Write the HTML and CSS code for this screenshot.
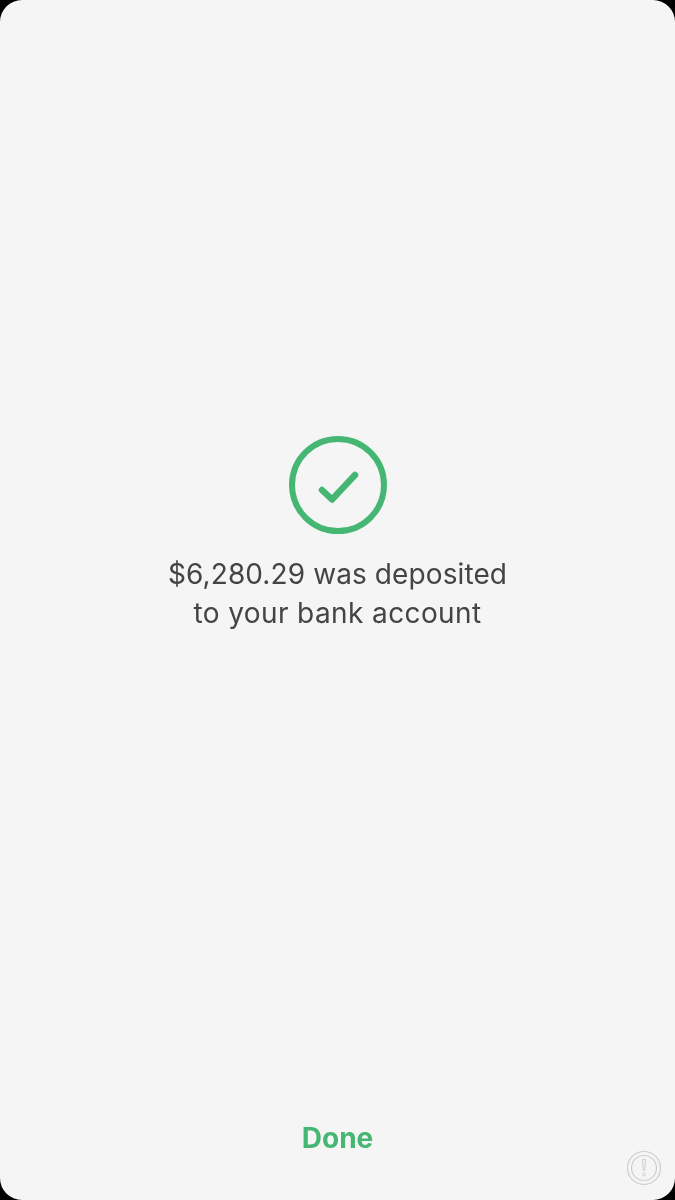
FILE: index.html
```html
<!DOCTYPE html>
<html lang="en">
<head>
  <meta charset="UTF-8">
  <meta name="viewport" content="width=device-width, initial-scale=1.0">
  <title>Deposit complete</title>
  <link rel="stylesheet" href="styles.css">
</head>
<body>
  <div class="screen">
    <div class="confirmation">
      <svg class="check-icon" width="98" height="98" viewBox="0 0 98 98" fill="none">
        <circle cx="49" cy="49" r="46" stroke="#45b772" stroke-width="6"/>
        <path d="M33 54 L43 63.500 L66 39" stroke="#45b772" stroke-width="6.500" stroke-linecap="round" stroke-linejoin="round"/>
      </svg>
      <p class="message">$6,280.29 was deposited<br><span class="message-second">to your bank account</span></p>
    </div>
    <button class="done-button">Done</button>
    <svg class="alert-badge" width="36" height="36" viewBox="0 0 36 36" fill="none">
      <circle cx="18" cy="18" r="16.500" stroke="#cfcfd1" stroke-width="1.200"/>
      <circle cx="18" cy="18" r="12.500" stroke="#cfcfd1" stroke-width="1.200"/>
      <path d="M16.500 9.500 h3 l-0.800 11 h-1.400 z" stroke="#cfcfd1" stroke-width="1"/>
      <circle cx="18" cy="24.500" r="1.500" stroke="#cfcfd1" stroke-width="1"/>
    </svg>
  </div>
</body>
</html>
```
FILE: styles.css
```css
html, body {
  margin: 0;
  background-color: #000;
}
.screen {
  position: relative;
  box-sizing: border-box;
  height: 1200px;
  padding: 436px 0 42px;
  display: flex;
  flex-direction: column;
  align-items: center;
  justify-content: space-between;
  background-color: #f5f5f6;
  border-radius: 22px;
  font-family: 'Inter', sans-serif;
  overflow: hidden;
}
.confirmation {
  display: flex;
  flex-direction: column;
  align-items: center;
}
.check-icon {
  display: block;
  margin-left: 1px;
  filter: blur(0.6px);
}
.message {
  margin: 21px 0 0;
  font-size: 28px;
  line-height: 39px;
  letter-spacing: 0.1px;
  color: #444446;
  text-align: center;
  filter: blur(0.6px);
}
.message-second {
  letter-spacing: 0.4px;
}
.done-button {
  padding: 0;
  border: none;
  background: none;
  font-family: inherit;
  font-size: 28px;
  line-height: 40px;
  font-weight: 700;
  color: #45b772;
  filter: blur(0.6px);
}
.alert-badge {
  position: absolute;
  right: 13px;
  bottom: 14px;
}
```
